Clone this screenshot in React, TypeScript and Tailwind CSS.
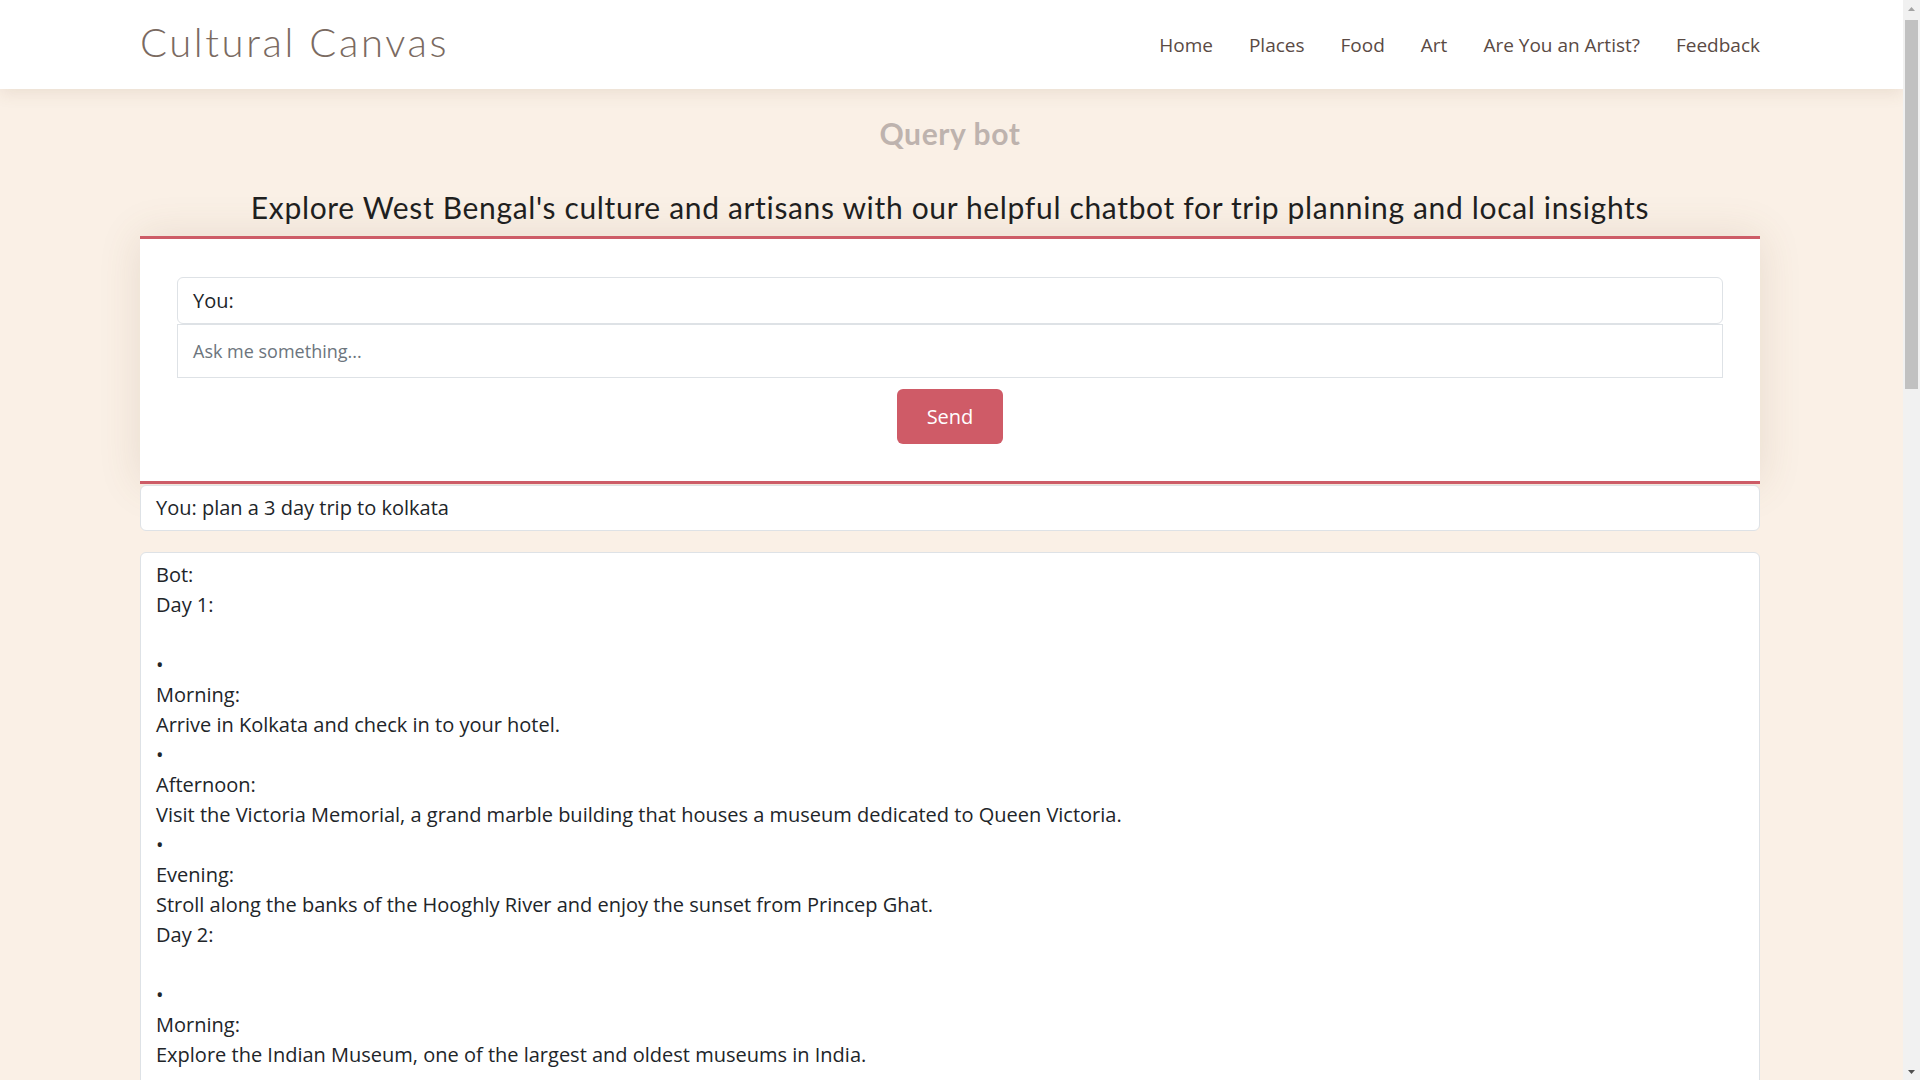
import React from "react";

const botLines: string[] = [
  "Bot:",
  "Day 1:",
  "",
  "•",
  "Morning:",
  "Arrive in Kolkata and check in to your hotel.",
  "•",
  "Afternoon:",
  "Visit the Victoria Memorial, a grand marble building that houses a museum dedicated to Queen Victoria.",
  "•",
  "Evening:",
  "Stroll along the banks of the Hooghly River and enjoy the sunset from Princep Ghat.",
  "Day 2:",
  "",
  "•",
  "Morning:",
  "Explore the Indian Museum, one of the largest and oldest museums in India.",
  "•",
  "Afternoon:",
  "Visit the Kalighat Kali Temple, one of the most revered Hindu temples in the city.",
  "•",
  "Evening:",
  "Take a ride on the iconic Kolkata tram and enjoy street food at Park Street.",
  "Day 3:",
  "",
  "•",
  "Morning:",
  "Visit Kumartuli, the potters' quarter, where artisans craft clay idols of gods and goddesses.",
  "•",
  "Afternoon:",
  "Shop for handicrafts, handloom sarees and terracotta souvenirs at New Market and Dakshinapan.",
  "•",
  "Evening:",
  "Cross the Howrah Bridge and watch the city lights shimmer over the river.",
];

function ScrollBar() {
  return (
    <div className="flex h-full w-[17px] shrink-0 flex-col bg-[#f1f1f1]">
      <div className="flex h-[17px] items-center justify-center">
        <svg width="9" height="6" viewBox="0 0 9 6">
          <path d="M4.5 1 L8 5 L1 5 Z" fill="#a3a3a3" />
        </svg>
      </div>
      <div className="mx-[2px] mt-[3px] h-[369px] bg-[#c1c1c1]" />
      <div className="flex-1" />
      <div className="flex h-[17px] items-center justify-center">
        <svg width="9" height="6" viewBox="0 0 9 6">
          <path d="M1 1 L8 1 L4.5 5 Z" fill="#505050" />
        </svg>
      </div>
    </div>
  );
}

export default function App() {
  return (
    <div className="flex h-screen overflow-hidden bg-[#faf0e6] font-['Open_Sans',sans-serif] text-[#212529]">
      <div className="min-w-0 flex-1 overflow-hidden">
        <header className="relative z-10 bg-white shadow-[0_4px_16px_rgba(120,90,60,0.12)]">
          <div className="ml-[140px] flex h-[89px] w-[1620px] items-center justify-between">
            <div className="mb-[5px] font-['Lato',sans-serif] text-[40px] font-light leading-none tracking-[2.6px] text-[#7a6a61]">
              Cultural Canvas
            </div>
            <nav className="mt-[2px] flex items-center gap-[36px] text-[19px] text-[#5a4a44]">
              <a>Home</a>
              <a>Places</a>
              <a>Food</a>
              <a>Art</a>
              <a>Are You an Artist?</a>
              <a>Feedback</a>
            </nav>
          </div>
        </header>

        <main className="ml-[140px] w-[1620px] pb-[40px]">
          <h2 className="mt-[27px] text-center font-['Lato',sans-serif] text-[30px] font-bold leading-[34px] tracking-[0.6px] text-[#beb3ae]">
            Query bot
          </h2>
          <p className="mt-[40px] text-center font-['Lato',sans-serif] text-[30px] leading-[34px] tracking-[0.66px] text-[#1f1f1f]">
            Explore West Bengal's culture and artisans with our helpful chatbot for trip planning and local insights
          </p>

          <section className="mt-[12px] border-y-[3px] border-[#cd5c67] bg-white px-[37px] pb-[37px] pt-[38px] shadow-[0_0_40px_rgba(120,90,60,0.14)]">
            <div className="flex h-[47px] items-center rounded-[6px] border border-[#dee2e6] px-[15px] text-[20px] text-[#212529]">
              You:
            </div>
            <div className="flex h-[54px] items-center border border-[#dee2e6] px-[15px] text-[18px] text-[#6c757d]">
              Ask me something...
            </div>
            <div className="mt-[11px] flex justify-center">
              <button className="h-[55px] w-[106px] rounded-[6px] bg-[#cf5b67] text-[20px] text-white">
                Send
              </button>
            </div>
          </section>

          <div className="mt-px rounded-[6px] border border-[#dee2e6] bg-white px-[15px] py-[7px] text-[20px] leading-[30px]">
            You: plan a 3 day trip to kolkata
          </div>

          <div className="mt-[21px] rounded-[6px] border border-[#dee2e6] bg-white px-[15px] pb-[8px] pt-[7px] text-[20px] leading-[30px]">
            {botLines.map((l, i) => (
              <div key={i} className="h-[30px] whitespace-nowrap">
                {l}
              </div>
            ))}
          </div>
        </main>
      </div>
      <ScrollBar />
    </div>
  );
}
